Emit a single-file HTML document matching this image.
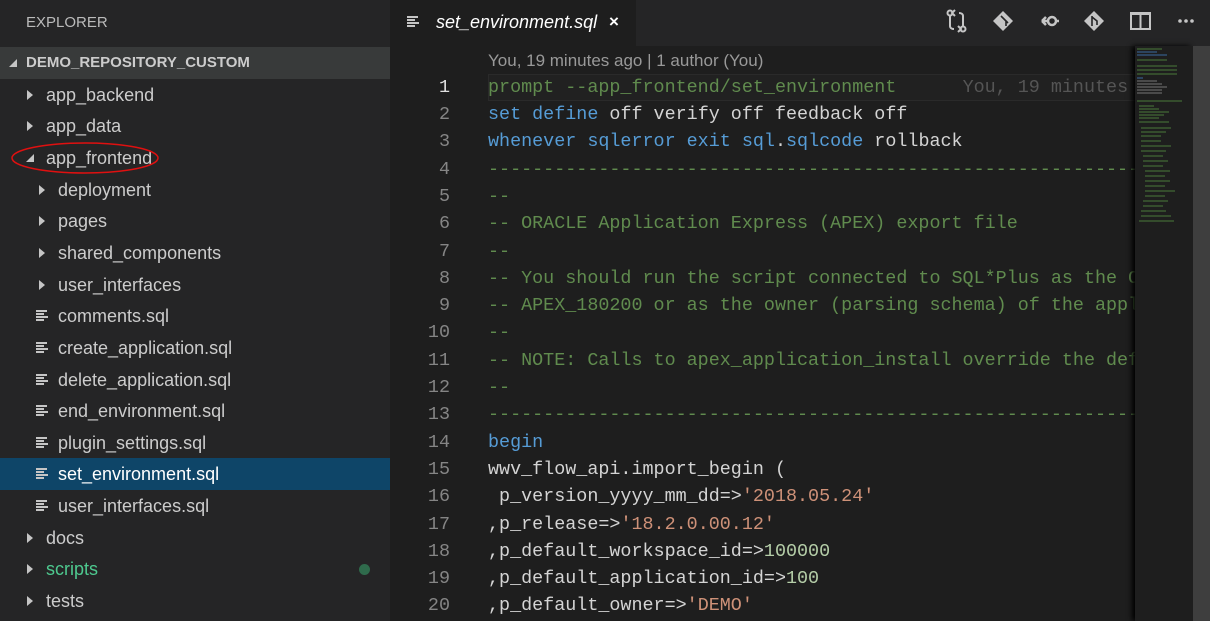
<!DOCTYPE html>
<html><head><meta charset="utf-8"><style>
*{margin:0;padding:0;box-sizing:border-box}
body{width:1210px;height:621px;overflow:hidden;background:#1e1e1e;font-family:"Liberation Sans",sans-serif;position:relative}
#side{position:absolute;left:0;top:0;width:390px;height:621px;background:#252526}
#side .title{position:absolute;left:26px;top:14px;font-size:15px;color:#bbbbbb}
.row{position:absolute;left:0;width:390px;height:32px;line-height:32px;font-size:18px;color:#cccccc;white-space:nowrap}
.hdr{background:#383a3a;font-weight:bold;font-size:15px;color:#cccccc}
.sel{background:#0e4568;color:#fff}
.arr{position:absolute;top:11px;width:0;height:0;border-top:5px solid transparent;border-bottom:5px solid transparent;border-left:6px solid #c5c5c5}
.arr.o{border:none;width:0;height:0;border-left:8px solid transparent;border-bottom:8px solid #c5c5c5;top:12px}
.fi{position:absolute;top:10px;width:12px;height:12px}
.fi i{position:absolute;left:0;height:2px;background:#c5c5c5}
#tabs{position:absolute;left:390px;top:0;width:820px;height:46px;background:#252526}
#tab{position:absolute;left:390px;top:0;width:246px;height:46px;background:#1e1e1e;color:#fff;font-style:italic;font-size:18px;line-height:44px}
#code{position:absolute;left:390px;top:46px;width:745px;height:575px;overflow:hidden;font-family:"Liberation Mono",monospace;font-size:18.4px}
.l{position:absolute;left:0;height:27.3px;line-height:27.3px;white-space:pre;width:2000px}
.n{position:absolute;left:0;width:60px;text-align:right;color:#858585}
.t{position:absolute;left:98px;color:#d4d4d4}
.c{color:#608b4e}.k{color:#569cd6}.s{color:#ce9178}.m{color:#b5cea8}
#mini{position:absolute;left:1135px;top:46px;width:58px;height:575px;background:#1e1e1e;box-shadow:-3px 0 5px #000}
#sb{position:absolute;left:1193px;top:46px;width:17px;height:575px;background:#3e3e3e}
</style></head><body>
<div id="side">
<div class="title">EXPLORER</div>
<div class="row hdr" style="top:47px"><span class="arr o" style="left:9px"></span><span style="position:absolute;left:26px">DEMO_REPOSITORY_CUSTOM</span></div>
<div class="row" style="top:79px"><span class="arr" style="left:27px"></span><span style="position:absolute;left:46px">app_backend</span></div>
<div class="row" style="top:110px"><span class="arr" style="left:27px"></span><span style="position:absolute;left:46px">app_data</span></div>
<div class="row" style="top:142px"><span class="arr o" style="left:26px"></span><span style="position:absolute;left:46px">app_frontend</span></div>
<div class="row" style="top:174px"><span class="arr" style="left:39px"></span><span style="position:absolute;left:58px">deployment</span></div>
<div class="row" style="top:205px"><span class="arr" style="left:39px"></span><span style="position:absolute;left:58px">pages</span></div>
<div class="row" style="top:237px"><span class="arr" style="left:39px"></span><span style="position:absolute;left:58px">shared_components</span></div>
<div class="row" style="top:269px"><span class="arr" style="left:39px"></span><span style="position:absolute;left:58px">user_interfaces</span></div>
<div class="row" style="top:300px"><span class="fi" style="left:36px"><i style="top:0;width:11px"></i><i style="top:3px;width:8px"></i><i style="top:6px;width:12px"></i><i style="top:9px;width:8px"></i></span><span style="position:absolute;left:58px">comments.sql</span></div>
<div class="row" style="top:332px"><span class="fi" style="left:36px"><i style="top:0;width:11px"></i><i style="top:3px;width:8px"></i><i style="top:6px;width:12px"></i><i style="top:9px;width:8px"></i></span><span style="position:absolute;left:58px">create_application.sql</span></div>
<div class="row" style="top:364px"><span class="fi" style="left:36px"><i style="top:0;width:11px"></i><i style="top:3px;width:8px"></i><i style="top:6px;width:12px"></i><i style="top:9px;width:8px"></i></span><span style="position:absolute;left:58px">delete_application.sql</span></div>
<div class="row" style="top:395px"><span class="fi" style="left:36px"><i style="top:0;width:11px"></i><i style="top:3px;width:8px"></i><i style="top:6px;width:12px"></i><i style="top:9px;width:8px"></i></span><span style="position:absolute;left:58px">end_environment.sql</span></div>
<div class="row" style="top:427px"><span class="fi" style="left:36px"><i style="top:0;width:11px"></i><i style="top:3px;width:8px"></i><i style="top:6px;width:12px"></i><i style="top:9px;width:8px"></i></span><span style="position:absolute;left:58px">plugin_settings.sql</span></div>
<div class="row sel" style="top:458px"><span class="fi" style="left:36px"><i style="top:0;width:11px"></i><i style="top:3px;width:8px"></i><i style="top:6px;width:12px"></i><i style="top:9px;width:8px"></i></span><span style="position:absolute;left:58px">set_environment.sql</span></div>
<div class="row" style="top:490px"><span class="fi" style="left:36px"><i style="top:0;width:11px"></i><i style="top:3px;width:8px"></i><i style="top:6px;width:12px"></i><i style="top:9px;width:8px"></i></span><span style="position:absolute;left:58px">user_interfaces.sql</span></div>
<div class="row" style="top:522px"><span class="arr" style="left:27px"></span><span style="position:absolute;left:46px">docs</span></div>
<div class="row" style="top:553px;color:#4ec98f"><span class="arr" style="left:27px"></span><span style="position:absolute;left:46px">scripts</span><span style="position:absolute;left:359px;top:11px;width:11px;height:11px;border-radius:50%;background:#2f6b4c"></span></div>
<div class="row" style="top:585px"><span class="arr" style="left:27px"></span><span style="position:absolute;left:46px">tests</span></div>
<svg style="position:absolute;left:8px;top:140px" width="152" height="38"><ellipse cx="77" cy="18" rx="73" ry="15" fill="none" stroke="#e01010" stroke-width="1.5"/></svg>
</div>
<div id="tabs"></div>
<div id="tab"><span class="fi" style="left:17px;top:16px"><i style="top:0;width:11px"></i><i style="top:3px;width:8px"></i><i style="top:6px;width:12px"></i><i style="top:9px;width:8px"></i></span><span style="position:absolute;left:46px">set_environment.sql</span><span style="position:absolute;left:219px;font-style:normal;font-weight:bold;font-size:17px">×</span></div>
<svg style="position:absolute;left:930px;top:0" width="280" height="46" fill="#c5c5c5" stroke="#c5c5c5">
<g fill="none" stroke-width="2"><circle cx="20" cy="13" r="2.5"/><circle cx="33" cy="29" r="2.5"/><path d="M20 16v10c0 2 2 3 4 3M33 26V16c0-2-2-3-4-3"/><path d="M25 10l-3 3 3 3M28 26l3 3-3 3"/></g>
<path stroke="none" d="M73 11l10 10-10 10-10-10z"/><g stroke="#252526" stroke-width="1.6" fill="none"><path d="M71 16l5 5v5M76 21l2 2"/></g>
<g fill="none" stroke-width="2.5"><circle cx="122" cy="21" r="4"/><path d="M112 21h6M126 21h3M112 21l4-4M112 21l4 4"/></g>
<path stroke="none" d="M164 11l10 10-10 10-10-10z"/><g stroke="#252526" stroke-width="1.6" fill="none"><path d="M162 16v10M162 17l5 4v4"/></g>
<g fill="none" stroke-width="2"><rect x="201" y="13" width="19" height="16"/><path d="M210.5 13v16M201 14h19"/></g>
<g stroke="none"><circle cx="250" cy="21" r="1.8"/><circle cx="256" cy="21" r="1.8"/><circle cx="262" cy="21" r="1.8"/></g>
</svg>
<div id="code">
<div style="position:absolute;left:98px;top:5px;font-family:'Liberation Sans',sans-serif;font-size:17px;color:#999">You, 19 minutes ago | 1 author (You)</div>
<div style="position:absolute;left:98px;top:28px;width:700px;height:27px;border:1px solid #2a2a2a;background:#212121"></div>
<div class="l" style="top:27.7px"><span class="n" style="color:#e0e0e0">1</span><span class="t c">prompt --app_frontend/set_environment      <span style="color:#555">You, 19 minutes ago</span></span></div>
<div class="l" style="top:55px"><span class="n">2</span><span class="t"><span class="k">set define</span> off verify off feedback off</span></div>
<div class="l" style="top:82.3px"><span class="n">3</span><span class="t"><span class="k">whenever sqlerror exit sql</span>.<span class="k">sqlcode</span> rollback</span></div>
<div class="l" style="top:109.6px"><span class="n">4</span><span class="t c">--------------------------------------------------------------------------</span></div>
<div class="l" style="top:136.9px"><span class="n">5</span><span class="t c">--</span></div>
<div class="l" style="top:164.2px"><span class="n">6</span><span class="t c">-- ORACLE Application Express (APEX) export file</span></div>
<div class="l" style="top:191.5px"><span class="n">7</span><span class="t c">--</span></div>
<div class="l" style="top:218.8px"><span class="n">8</span><span class="t c">-- You should run the script connected to SQL*Plus as the Oracle user</span></div>
<div class="l" style="top:246.1px"><span class="n">9</span><span class="t c">-- APEX_180200 or as the owner (parsing schema) of the application.</span></div>
<div class="l" style="top:273.4px"><span class="n">10</span><span class="t c">--</span></div>
<div class="l" style="top:300.7px"><span class="n">11</span><span class="t c">-- NOTE: Calls to apex_application_install override the defaults below.</span></div>
<div class="l" style="top:328px"><span class="n">12</span><span class="t c">--</span></div>
<div class="l" style="top:355.3px"><span class="n">13</span><span class="t c">--------------------------------------------------------------------------</span></div>
<div class="l" style="top:382.6px"><span class="n">14</span><span class="t k">begin</span></div>
<div class="l" style="top:409.9px"><span class="n">15</span><span class="t">wwv_flow_api.import_begin (</span></div>
<div class="l" style="top:437.2px"><span class="n">16</span><span class="t"> p_version_yyyy_mm_dd=&gt;<span class="s">'2018.05.24'</span></span></div>
<div class="l" style="top:464.5px"><span class="n">17</span><span class="t">,p_release=&gt;<span class="s">'18.2.0.00.12'</span></span></div>
<div class="l" style="top:491.8px"><span class="n">18</span><span class="t">,p_default_workspace_id=&gt;<span class="m">100000</span></span></div>
<div class="l" style="top:519.1px"><span class="n">19</span><span class="t">,p_default_application_id=&gt;<span class="m">100</span></span></div>
<div class="l" style="top:546.4px"><span class="n">20</span><span class="t">,p_default_owner=&gt;<span class="s">'DEMO'</span></span></div>
</div>
<div id="mini">
<svg width="58" height="200" stroke-width="1">
<g stroke="#4a7a3a"><path d="M2 3h25M2 14h30M2 20h40M2 24h40M2 28h40"/></g>
<g stroke="#3a6aa0"><path d="M2 6h20M2 9h30M2 32h6"/></g>
<g stroke="#777"><path d="M2 35h20M2 38h25M2 41h30M2 44h25M2 47h25"/></g>
<g stroke="#4a7a3a"><path d="M2 55h45M4 60h15M4 63h20M4 66h30M4 69h25M4 72h20M4 76h30M6 82h30M6 86h25M6 90h20M6 95h20M6 100h30M6 105h25M8 110h20M8 115h25M8 120h20M10 125h25M10 130h20M10 135h25M10 140h20M10 145h30M10 150h20M8 155h25M8 160h20M6 165h25M6 170h30M4 175h35"/></g>
</svg></div>
<div id="sb"></div>
</body></html>
